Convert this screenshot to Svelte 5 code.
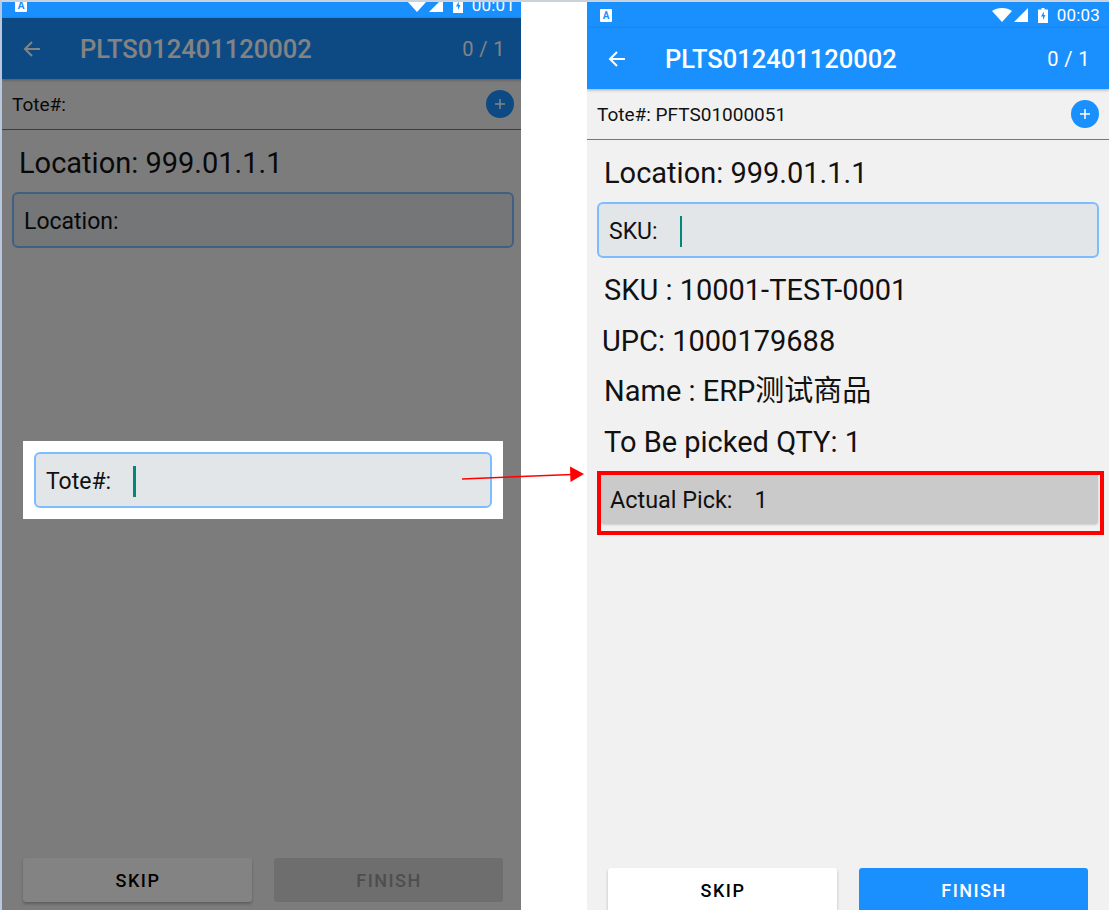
<script lang="ts">
	const lines = [
		{ text: 'SKU : 10001-TEST-0001', nudge: false },
		{ text: 'UPC: 1000179688', nudge: true },
		{ text: 'Name : ERP测试商品', nudge: false },
		{ text: 'To Be picked QTY: 1', nudge: false }
	];
</script>

{#snippet statusBar(time: string)}
	<div class="status">
		<span class="notif">A</span>
		<svg class="wifi" width="20" height="14" viewBox="0 0 20 14"><path d="M0 3C5-1 15-1 20 3L10 14z" fill="#fff" /></svg>
		<svg class="signal" width="14" height="14" viewBox="0 0 14 14"><path d="M14 0v14H0z" fill="#fff" /></svg>
		<svg class="battery" width="10" height="15" viewBox="0 0 10 15"><path d="M3.500 0h3v1.500H10V15H0V1.500h3.500zM5.800 3.500 3 8.500h2V12l2.500-5H5.800z" fill="#fff" fill-rule="evenodd" /></svg>
		<span class="time">{time}</span>
	</div>
{/snippet}

{#snippet appBar()}
	<header class="appbar">
		<svg width="18" height="18" viewBox="0 0 18 18" fill="none" stroke="currentColor" stroke-width="2"><path d="M17 9H2M9 2 2 9l7 7" /></svg>
		<h1>PLTS012401120002</h1>
		<span class="count">0 / 1</span>
	</header>
{/snippet}

{#snippet toteBar(value: string)}
	<div class="tote">
		<span>Tote#:{value}</span>
		<button class="add" aria-label="Add">
			<svg width="12" height="12" viewBox="0 0 12 12" stroke="currentColor" stroke-width="1.500"><path d="M6 1v10M1 6h10" /></svg>
		</button>
	</div>
{/snippet}

<div class="page">
	<section class="phone left">
		{@render statusBar('00:01')}
		<div class="screen">
			{@render appBar()}
			{@render toteBar('')}
			<main>
				<p class="location">Location: 999.01.1.1</p>
				<div class="field"><span>Location:</span></div>
			</main>
			<footer>
				<button class="btn skip">SKIP</button>
				<button class="btn off">FINISH</button>
			</footer>
			<div class="scrim"></div>
			<div class="popup">
				<div class="field"><span>Tote#:</span><i class="caret"></i></div>
			</div>
		</div>
	</section>

	<section class="phone right">
		{@render statusBar('00:03')}
		<div class="screen">
			{@render appBar()}
			{@render toteBar(' PFTS01000051')}
			<main>
				<p class="location">Location: 999.01.1.1</p>
				<div class="field"><span>SKU:</span><i class="caret"></i></div>
				<div class="lines">
					{#each lines as line}
						<p class:nudge={line.nudge}>{line.text}</p>
					{/each}
				</div>
				<div class="mark">
					<div class="pick"><span>Actual Pick:</span><span>1</span></div>
				</div>
			</main>
			<footer>
				<button class="btn skip">SKIP</button>
				<button class="btn go">FINISH</button>
			</footer>
		</div>
	</section>

	<svg class="arrow" width="124" height="20" viewBox="0 0 124 20"><path d="M0 15 110 10.500" stroke="#f00" stroke-width="1.500" /><path d="M108 2.500 122 10 108.500 18z" fill="#f00" /></svg>
</div>

<style>
	:global(body) {
		margin: 0;
		background: #fff;
		overflow: hidden;
	}

	.page {
		position: relative;
		display: flex;
		gap: 66px;
		height: 908px;
		border-top: 2px solid #ccd2dc;
		border-left: 2px solid #b9c8e0;
		overflow: hidden;
		font-family: Roboto, 'Noto Sans CJK SC', sans-serif;
		color: #111;
	}

	.phone {
		display: flex;
		flex-direction: column;
		flex: none;
		height: 918px;
		overflow: hidden;
	}

	.phone > * {
		width: 522px;
	}

	.left {
		width: 519px;
		margin-top: -10px;
	}

	.right {
		width: 522px;
	}

	.status {
		display: flex;
		align-items: center;
		height: 26px;
		flex: none;
		background: #1a90ff;
		color: #fff;
		padding: 0 9px 0 13px;
		box-sizing: border-box;
	}

	.notif {
		width: 12px;
		height: 13px;
		margin-right: auto;
		background: #fff;
		border-radius: 1px;
		color: #1a90ff;
		font-size: 10px;
		font-weight: 700;
		line-height: 13px;
		text-align: center;
	}

	.wifi {
		margin-right: 2px;
	}

	.signal {
		margin-right: 10px;
	}

	.battery {
		margin-right: 9px;
	}

	.time {
		font-size: 17px;
		letter-spacing: 0.2px;
	}

	.screen {
		position: relative;
		flex: 1;
		display: flex;
		flex-direction: column;
		background: #f1f1f1;
	}

	.appbar {
		display: flex;
		align-items: center;
		height: 61px;
		flex: none;
		box-sizing: border-box;
		padding: 1px 19px 0 21px;
		background: #1a90ff;
		color: #fff;
		box-shadow: 0 1px 3px rgba(0, 0, 0, 0.3);
	}

	h1 {
		margin: 0 0 0 39px;
		font-size: 25.500px;
		font-weight: 500;
		flex: 1;
	}

	.count {
		font-size: 20px;
		letter-spacing: 0.4px;
	}

	.tote {
		display: flex;
		align-items: center;
		justify-content: space-between;
		height: 51px;
		flex: none;
		padding: 0 10px;
		border-bottom: 1px solid #777;
		box-sizing: border-box;
		font-size: 19px;
		white-space: pre;
	}

	.add {
		display: flex;
		align-items: center;
		justify-content: center;
		width: 28px;
		height: 28px;
		padding: 0;
		border: 0;
		border-radius: 50%;
		background: #1a90ff;
		color: #fff;
	}

	main {
		flex: 1;
		padding: 0 10px;
	}

	.location {
		margin: 0;
		padding-left: 7px;
		height: 62px;
		line-height: 66px;
		font-size: 29px;
	}

	.field {
		display: flex;
		align-items: center;
		height: 56px;
		box-sizing: border-box;
		padding: 2px 10px 0;
		border: 2px solid #7cbcff;
		border-radius: 6px;
		background: #e2e6e9;
		font-size: 23px;
		gap: 22px;
	}

	.caret {
		width: 2.500px;
		height: 31px;
		background: #00897b;
	}

	.lines {
		padding-top: 7px;
	}

	.lines p {
		margin: 0;
		height: 50.500px;
		padding-left: 7px;
		line-height: 51px;
		font-size: 29px;
	}

	.lines .nudge {
		padding-left: 5px;
	}

	.mark {
		margin-top: 4px;
		width: 507px;
		height: 64px;
		box-sizing: border-box;
		border: 4px solid #f00;
		background: #f1f1f1;
	}

	.pick {
		display: flex;
		align-items: center;
		gap: 22px;
		height: 49px;
		padding: 1px 0 0 9px;
		box-sizing: border-box;
		margin-right: 2px;
		background: #cacaca;
		border-radius: 0 0 3px 3px;
		box-shadow: 0 1px 2px rgba(0, 0, 0, 0.15);
		font-size: 23.400px;
	}

	footer {
		display: flex;
		gap: 22px;
		flex: none;
		padding: 0 21px 8px;
	}

	.btn {
		flex: 1;
		height: 44px;
		border: 0;
		border-radius: 3px;
		font-family: inherit;
		font-size: 18px;
		font-weight: 500;
		letter-spacing: 1.500px;
		text-indent: 1px;
	}

	.skip {
		background: #fff;
		color: #000;
		box-shadow: 0 2px 3px rgba(0, 0, 0, 0.25);
	}

	.go {
		background: #1a90ff;
		color: #fff;
	}

	.off {
		background: #d6d6d6;
		color: #999;
	}

	.scrim {
		position: absolute;
		inset: 0;
		background: rgba(0, 0, 0, 0.486);
	}

	.popup {
		position: absolute;
		left: 21px;
		top: 423px;
		width: 480px;
		height: 78px;
		box-sizing: border-box;
		padding: 11px;
		background: #fff;
	}

	.arrow {
		position: absolute;
		left: 460px;
		top: 462px;
	}
</style>
